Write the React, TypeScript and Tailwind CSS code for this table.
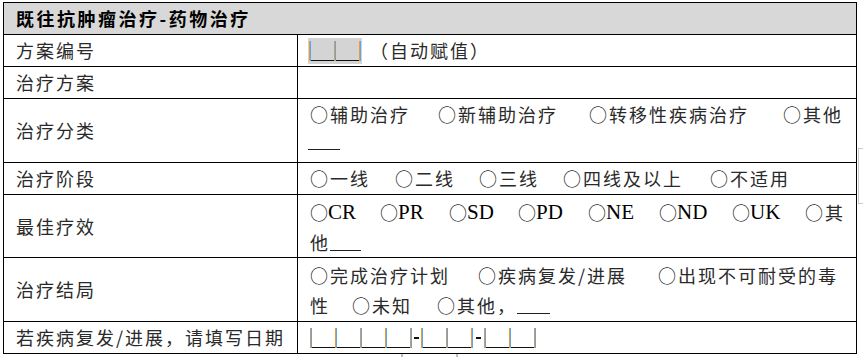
import type { ReactNode } from 'react';

const cjk = "font-['Noto_Sans_CJK_SC',sans-serif]";
const serif = "font-['Liberation_Serif','Noto_Sans_CJK_SC',serif]";

function Opt({ w, children }: { w?: string; children: ReactNode }) {
  return <span className={`inline-flex shrink-0 items-center ${w ?? ''}`}>{children}</span>;
}

function Blank({ w = 'w-[32px]' }: { w?: string }) {
  return <span className={`inline-block h-[18px] ${w} border-b border-[#222]`} />;
}

function Pipe() {
  return <span className="inline-block h-[20px] w-[2px] border-l border-[#e49a45] bg-[#5aa8e8]" />;
}

function Seg() {
  return <span className="inline-block h-[20px] w-[23px] border-b border-[#111]" />;
}

function Dash({ w }: { w: string }) {
  return (
    <span className={`inline-flex h-[20px] items-center justify-center ${w}`}>
      <span className="h-[2px] w-[5px] bg-[#111]" />
    </span>
  );
}

function Line({ children }: { children: ReactNode }) {
  return <div className="flex h-[30px] items-center whitespace-nowrap">{children}</div>;
}

function Row({
  label,
  h,
  top = 'items-center',
  children,
}: {
  label: string;
  h: string;
  top?: string;
  children?: ReactNode;
}) {
  return (
    <div className={`flex border-t border-black ${h}`}>
      <div className="flex w-[293px] shrink-0 items-center pl-3">{label}</div>
      <div className={`flex flex-1 border-l border-black pl-3 ${top}`}>{children}</div>
    </div>
  );
}

const grades = ['CR', 'PR', 'SD', 'PD', 'NE', 'ND', 'UK'];
const gradeWidths = ['w-[70px]', 'w-[69px]', 'w-[69px]', 'w-[70px]', 'w-[71px]', 'w-[73px]', 'w-[73px]'];

export default function App() {
  return (
    <div
      className={`relative h-[357px] w-[863px] overflow-hidden bg-white text-[18px] tracking-[2px] text-[#2a2a2a] ${cjk}`}
    >
      <div className="ml-[3px] mt-[2px] w-[854px] border border-black">
        <div className="flex h-[31px] items-center bg-[#d8d8d8] pl-3 font-bold tracking-[2.5px] text-black">
          既往抗肿瘤治疗-药物治疗
        </div>

        <Row label="方案编号" h="h-[32px]">
          <div className="-ml-[2px] flex h-[26px] items-center bg-[#d4d4d4] pl-[1px] pr-[1px]">
            <Pipe />
            <Seg />
            <Pipe />
            <Seg />
            <Pipe />
          </div>
          <span className="ml-[8px]">（自动赋值）</span>
        </Row>

        <Row label="治疗方案" h="h-[32px]" />

        <Row label="治疗分类" h="h-[64px]" top="flex-col">
          <Line>
            <Opt w="w-[128px]">○辅助治疗</Opt>
            <Opt w="w-[151px]">○新辅助治疗</Opt>
            <Opt w="w-[194px]">○转移性疾病治疗</Opt>
            <Opt>○其他</Opt>
          </Line>
          <Line>
            <span className="-ml-[2px] -mt-[3px]">
              <Blank />
            </span>
          </Line>
        </Row>

        <Row label="治疗阶段" h="h-[32px]">
          <Opt w="w-[85px]">○一线</Opt>
          <Opt w="w-[84px]">○二线</Opt>
          <Opt w="w-[84px]">○三线</Opt>
          <Opt w="w-[147px]">○四线及以上</Opt>
          <Opt>○不适用</Opt>
        </Row>

        <Row label="最佳疗效" h="h-[63px]" top="flex-col pt-[2px]">
          <Line>
            {grades.map((t, i) => (
              <Opt key={t} w={gradeWidths[i]}>
                <span className="tracking-[0px]">○</span>
                <span className={`${serif} text-[21px] leading-none tracking-[0px] text-black`}>{t}</span>
              </Opt>
            ))}
            <Opt>○其</Opt>
          </Line>
          <Line>
            <span>他</span>
            <Blank w="w-[31px]" />
          </Line>
        </Row>

        <Row label="治疗结局" h="h-[64px]" top="flex-col pt-[2px]">
          <Line>
            <Opt w="w-[168px]">○完成治疗计划</Opt>
            <Opt w="w-[180px]">○疾病复发/进展</Opt>
            <Opt>○出现不可耐受的毒</Opt>
          </Line>
          <Line>
            <Opt w="w-[42px]">性</Opt>
            <Opt w="w-[85px]">○未知</Opt>
            <Opt w="w-[80px]">○其他，</Opt>
            <Blank w="w-[33px]" />
          </Line>
        </Row>

        <Row label="若疾病复发/进展，请填写日期" h="h-[32px]">
          <Pipe />
          <Seg />
          <Pipe />
          <Seg />
          <Pipe />
          <Seg />
          <Pipe />
          <Seg />
          <Pipe />
          <Dash w="w-[9px]" />
          <Pipe />
          <Seg />
          <Pipe />
          <Seg />
          <Pipe />
          <Dash w="w-[11px]" />
          <Pipe />
          <Seg />
          <Pipe />
          <Seg />
          <Pipe />
        </Row>
      </div>

      <div className="absolute left-[858px] top-[148px] h-[56px] w-[5px] border-y border-l border-[#c9c9c9]" />
      <div className="absolute left-[401px] top-[354px] h-[3px] w-[2px] bg-[#bdbdbd]" />
      <div className="absolute left-[456px] top-[354px] h-[3px] w-[2px] bg-[#bdbdbd]" />
    </div>
  );
}
